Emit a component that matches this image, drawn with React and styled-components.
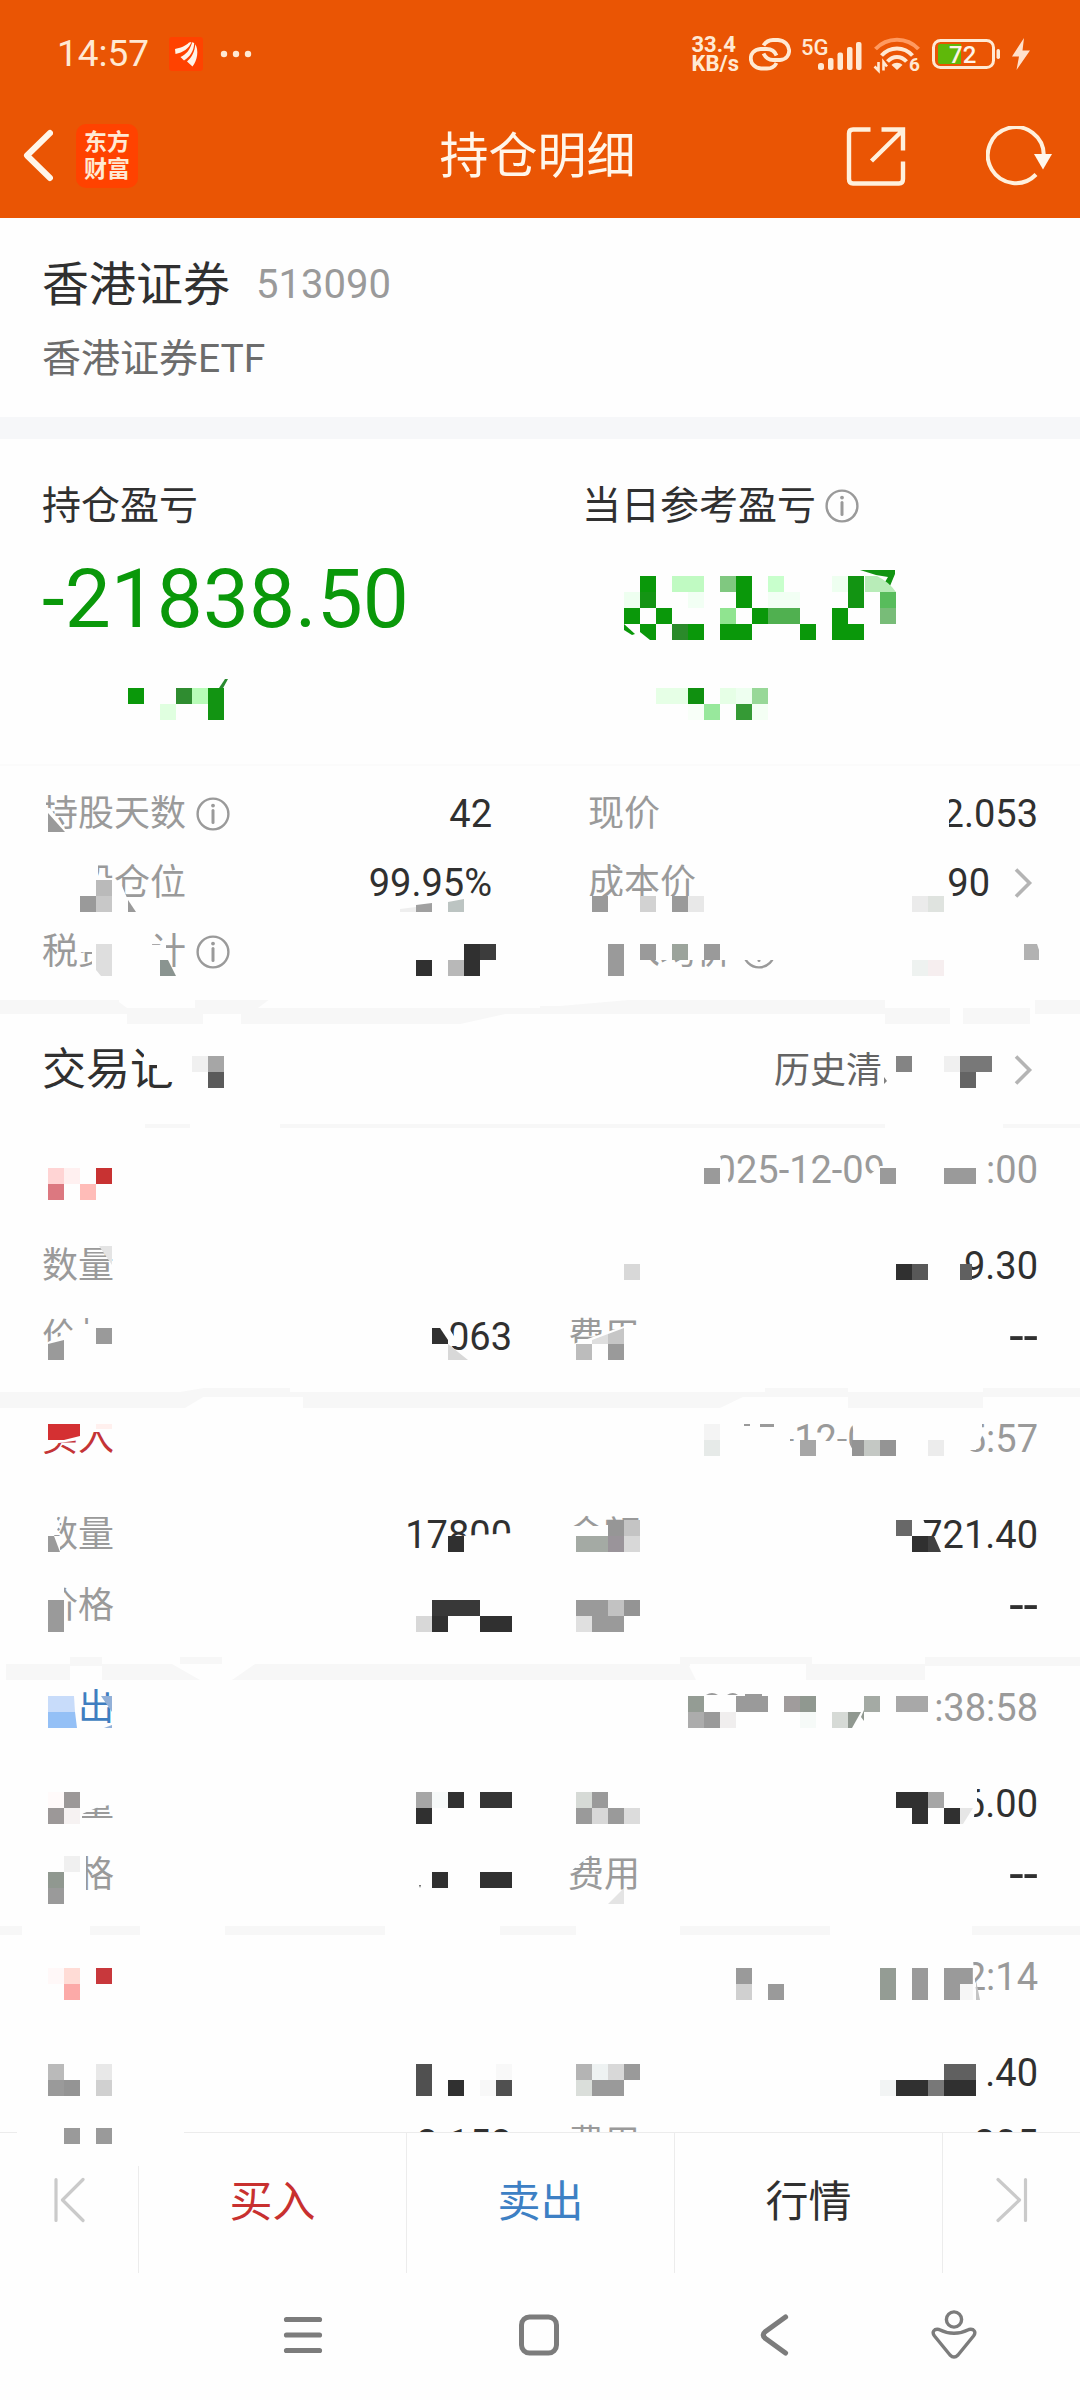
import React from 'react';
import styled, { createGlobalStyle } from 'styled-components';

const PAPER = '#fefefe';
const BAND = '#f7f7f7';
const INK = '#303030';
const GREY = '#9a9a9a';
const GREEN = '#0a980a';

// Mosaic cells sit on one 16px grid shared by the whole page:
// [column, row, columns, rows, color]
const CELL = 16;

function Mosaic({ right, top, cuts = [], cells = [] }) {
    return (
        <MosaicLayer $right={right} width="540" height="100" aria-hidden="true">
            <g transform={`translate(${right ? -540 : 0} ${-top})`}>
                {cuts.map(([d, fill], i) => (
                    <path key={i} d={d} fill={fill || PAPER} />
                ))}
                {cells.map(([x, y, w, h, fill], i) => (
                    <rect key={i} x={x * CELL} y={y * CELL} width={w * CELL} height={h * CELL} fill={fill} />
                ))}
            </g>
        </MosaicLayer>
    )
}

function InfoButton() {
    return (
        <IconButton aria-label="说明">
            <svg width="34" height="34" viewBox="0 0 34 34" fill="none" stroke="#9a9a9a" strokeWidth="2.4">
                <circle cx="17" cy="17" r="15.4" />
                <circle cx="17" cy="8.6" r="1.9" fill="#9a9a9a" stroke="none" />
                <path d="M17 13.4V25.6" strokeWidth="3" strokeLinecap="round" />
            </svg>
        </IconButton>
    )
}

function Chevron() {
    return (
        <svg width="24" height="34" viewBox="0 0 24 34" fill="none" stroke="#b4b4b4" strokeWidth="3.6">
            <path d="M2 3.5L15.5 17L2 30.5" />
        </svg>
    )
}

function StatusBar() {
    return (
        <Status>
            <Clock>14:57</Clock>
            <svg width="34" height="34" viewBox="0 0 34 34">
                <rect width="34" height="34" rx="3" fill="#ff4200" />
                <g fill="#fff4e8">
                    <path d="M6 12C11 11 17 9 20 5.5L22.5 5C20 11.5 14 15.5 6.5 17Z" />
                    <path d="M11.5 20C17 17.5 21 13 23.2 5.2L25.2 6C25 13.5 21 20 15 23.5Z" />
                    <path d="M18 24.5C23 20 26 14 26.2 7.2C30 13 28.5 23 23.5 29.5Z" />
                </g>
            </svg>
            <Dots width="32" height="8" viewBox="0 0 32 8" fill="#ffe9d3">
                <circle cx="4" cy="4" r="3.2" />
                <circle cx="16" cy="4" r="3.2" />
                <circle cx="28" cy="4" r="3.2" />
            </Dots>
            <StatusRight>
                <NetSpeed>33.4<br />KB/s</NetSpeed>
                <svg width="42" height="34" viewBox="0 0 42 34" fill="none" stroke="#ffe9d3" strokeWidth="3.8">
                    <path d="M14.5 8.5C17 4.5 20 3 24 3H29C43 4 44 22 31 23H24C19 23 16.5 20.5 14.5 16.5" />
                    <path d="M27.5 26C25.5 30 22 31.5 18 31.5H12C-1 30.5 -2 13 11.5 12H17.5C23 12 26 14.5 27.5 18.5" />
                </svg>
                <StatusIcon width="62" height="36" viewBox="0 0 62 36" fill="#ffe9d3">
                    <NetType x="0" y="19">5G</NetType>
                    <rect x="17" y="27" width="6" height="7" rx="2.5" />
                    <rect x="27" y="22" width="5.5" height="12" rx="2" />
                    <rect x="36.5" y="16.5" width="5.5" height="17.5" rx="2" />
                    <rect x="46" y="11" width="5.5" height="23" rx="2" />
                    <rect x="55" y="6" width="5.5" height="28" rx="2" />
                </StatusIcon>
                <StatusIcon width="48" height="38" viewBox="0 0 48 38" fill="none" strokeWidth="4">
                    <path d="M2.5 14C14 1.5 34 1.5 45.5 14" stroke="#ff9a60" />
                    <path d="M8.5 20.5C17 11 31 11 39.5 20.5" stroke="#ffe9d3" />
                    <path d="M14.5 26.5C20 20.5 28 20.5 33.5 26.5" stroke="#ffe9d3" />
                    <path d="M24 35L18.5 30C21.5 27 26.5 27 29.5 30Z" fill="#ffe9d3" />
                    <path d="M5.5 27V35.5L1.5 31.5M10.5 35.5V27L14 31.5" stroke="#ffe9d3" strokeWidth="2.6" />
                    <WifiGen x="36" y="36">6</WifiGen>
                </StatusIcon>
                <svg width="70" height="34" viewBox="0 0 70 34">
                    <rect x="2.5" y="3.5" width="60" height="27" rx="7" fill="none" stroke="#ffe9d3" strokeWidth="3" />
                    <path d="M9 7H30V27H9Q7 27 7 25V9Q7 7 9 7Z" fill="#5fb80a" />
                    <rect x="65.5" y="12" width="3.5" height="10" rx="1.7" fill="#ffe9d3" />
                    <BatteryText x="18" y="26">72</BatteryText>
                </svg>
                <svg width="20" height="34" viewBox="0 0 20 34">
                    <path d="M13 1L1 19.5H8L5.5 33L19 13.5H11.5Z" fill="#ffe0cc" />
                </svg>
            </StatusRight>
        </Status>
    )
}

function TitleBar() {
    return (
        <TitleRow>
            <TitleSide>
                <IconButton aria-label="返回">
                    <svg width="32" height="56" viewBox="0 0 32 56" fill="none" stroke="#fff6ea" strokeWidth="6" strokeLinecap="round" strokeLinejoin="round">
                        <path d="M29 5L6 27.5L29 50" />
                    </svg>
                </IconButton>
                <Brand>东方<br />财富</Brand>
            </TitleSide>
            <Title>持仓明细</Title>
            <TitleSide $end>
                <IconButton aria-label="分享">
                    <svg width="60" height="60" viewBox="0 0 60 60" fill="none" stroke="#fff0dc" strokeWidth="4.4">
                        <path d="M24.5 3.5H7Q3 3.5 3 7.5V53Q3 57.5 7 57.5H53Q57 57.5 57 53V35.5" />
                        <path d="M35.5 3.5H57V24.5M56 5L25.5 35" />
                    </svg>
                </IconButton>
                <IconButton aria-label="刷新">
                    <svg width="68" height="60" viewBox="0 0 68 60">
                        <path d="M50 48.5A28 28 0 1 1 57.8 29" fill="none" stroke="#fff0dc" strokeWidth="4" />
                        <path d="M48 28H66L57 43.5Z" fill="#fff8ee" />
                    </svg>
                </IconButton>
            </TitleSide>
        </TitleRow>
    )
}

function Stat({ label, info, value, link }) {
    return (
        <StatRow>
            <Label>{label}</Label>
            {info && <InfoButton />}
            <Value>{value}</Value>
            {link && <ChevronBox><Chevron /></ChevronBox>}
        </StatRow>
    )
}

const profitLeft = {
    cuts: [
        ['M219 688L225 679H228L222 690Z', '#2a8a30'],
    ],
    cells: [
        [8, 43, 1, 1, GREEN], [11, 43, 1, 1, '#2f8c30'], [12, 43, 1, 1, '#b8fcb8'], [13, 43, 1, 2, '#129412'],
        [10, 44, 1, 1, '#e0ffe0'],
    ],
};

const profitRight = {
    cuts: [
        ['M860 570H895V574L890 586L885 582L888 577L876 575Z', '#129412'],
        ['M865 576H877Q889 582 896 592H865Z', '#b8ecb8'],
        ['M624 624L635 634L632 635L624 630Z', GREEN],
        ['M640 624H656V640H650L640 632Z', GREEN],
    ],
    cells: [
        [40, 36, 1, 1, GREEN], [42, 36, 2, 1, '#c0fac2'], [45, 36, 1, 1, '#80c880'], [46, 36, 1, 2, GREEN],
        [48, 36, 1, 1, '#c8ffcc'], [52, 36, 1, 1, '#eefff0'], [53, 36, 1, 2, '#129412'],
        [39, 37, 1, 1, '#eefff0'], [40, 37, 1, 1, '#149414'], [43, 37, 1, 1, '#f2fff4'], [48, 37, 2, 1, '#f2fff4'],
        [55, 37, 1, 1, '#58bc5c'],
        [39, 38, 1, 1, GREEN], [41, 38, 1, 1, GREEN], [45, 38, 1, 1, '#90e490'], [47, 38, 1, 1, GREEN],
        [48, 38, 2, 1, '#50b050'], [52, 38, 1, 1, GREEN], [55, 38, 1, 1, '#78bc78'],
        [42, 39, 1, 1, '#2a8a2a'], [43, 39, 1, 1, GREEN], [45, 39, 2, 1, GREEN], [50, 39, 1, 1, GREEN],
        [52, 39, 2, 1, GREEN],
        [41, 43, 2, 1, '#e6ffe6'], [43, 43, 1, 1, '#109010'], [45, 43, 1, 1, '#e6ffe6'], [46, 43, 1, 1, '#eefff0'],
        [47, 43, 1, 1, '#98d898'], [43, 44, 1, 1, '#f8fff8'], [44, 44, 1, 1, '#98e89c'], [46, 44, 1, 1, '#359a35'],
        [47, 44, 1, 1, '#f4fff4'],
    ],
};

const statsLeft = {
    cuts: [
        ['M40 795H46V834H40ZM46 808L50 808L68 834H46Z'],
        ['M48 813L65 832H48Z', GREY],
        ['M40 860H98V905H40ZM98 880H113V905H98Z'],
        ['M113 886H122L130 905H113Z'],
        ['M128 900L136 912H128Z', GREY],
        ['M400 909L416 907V912H400Z', '#eeeeee'],
        ['M416 905L432 903V912H416Z', '#a0a0a0'],
        ['M448 902L464 899V912H448Z', '#bcc4c2'],
        ['M78 930H114V952H78ZM92 930H152V974H92ZM150 945H166V974H150Z'],
        ['M96 944H112V976H101L96 970Z', '#dedede'],
        ['M160 960H168L176 976H160Z', '#8a9490'],
        ['M119 999H195V1008H127L119 1002ZM270 999H540V1008H258Z'],
        ['M127 1013H203V1024H127ZM241 1013H510L460 1024H241Z', BAND],
    ],
    cells: [
        [6, 55, 1, 1, '#bababa'], [5, 56, 1, 1, GREY], [6, 56, 1, 1, '#c8c8c8'],
        [29, 59, 1, 2, INK], [30, 59, 1, 1, '#3c3c3c'], [26, 60, 1, 1, INK], [28, 60, 1, 1, '#b8b8b8'],
    ],
};

const statsRight = {
    cuts: [
        ['M940 790H949V830H940Z'],
        ['M580 896H710V912H580Z'],
        ['M580 930H785V960H580ZM580 930H646V976H580Z'],
        ['M1024 944H1037L1039 950V960H1024Z', '#b2b2b2'],
        ['M540 999H640L560 1006H540ZM885 999H1035V1015H885Z'],
        ['M885 1008H950V1024H885ZM963 1008H1030V1024H963Z', BAND],
    ],
    cells: [
        [37, 56, 1, 1, GREY], [40, 56, 1, 1, '#d2d2d2'], [42, 56, 1, 1, GREY], [43, 56, 1, 1, '#e8e8e8'],
        [57, 56, 1, 1, '#ebebeb'], [58, 56, 1, 1, '#dfe3df'],
        [38, 59, 1, 2, GREY], [40, 59, 1, 1, GREY], [42, 59, 1, 1, '#9ca49c'], [44, 59, 1, 1, GREY],
        [57, 60, 1, 1, '#eef2f0'], [58, 60, 1, 1, '#f6eeef'],
    ],
};

const historyLeft = {
    cuts: [
        ['M144 1044H176V1064H150V1060H144ZM157 1064H176V1082H157Z'],
        ['M0 1123H145V1129H0ZM190 1123H280V1129H190Z'],
    ],
    cells: [[12, 66, 1, 1, '#f0f0f0'], [13, 66, 1, 1, '#a6a6a6'], [13, 67, 1, 1, '#5a5a5a']],
};

const historyRight = {
    cuts: [
        ['M885 1123H1003V1129H885Z'],
        ['M884 1077L887 1081L884 1084Z', '#808080'],
    ],
    cells: [
        [56, 66, 1, 1, '#848484'], [59, 66, 1, 1, '#f0f0f0'], [60, 66, 2, 1, '#787878'], [60, 67, 1, 1, '#646464'],
    ],
};

// time: [start, width of the covered part, end]
const records = [
    {
        top: 1128,
        time: ['025-12-09', 101, ':00'],
        rows: [
            ['数量', '', '', '9.30'],
            ['价格', '063', '费用', '--'],
        ],
        left: {
            cuts: [
                ['M99 1246H112V1265Z', '#e4e4e4'],
                ['M40 1346L72 1330L76 1324H114V1362H40ZM90 1310H114V1326H90Z'],
                ['M48 1344L64 1340V1360H48Z', GREY],
                ['M438 1328H449L460 1346H438Z'],
                ['M432 1328H440L448 1340V1344H432Z', INK],
                ['M448 1344L468 1360H448Z', '#d8d8d8'],
                ['M0 1387H210L180 1392H0ZM290 1387H540V1392H290Z'],
                ['M0 1396H205L185 1408H0ZM303 1396H540V1408H303Z', BAND],
            ],
            cells: [
                [3, 73, 1, 1, '#ffd4d4'], [4, 73, 1, 1, '#fff0f0'], [6, 73, 1, 1, '#c83232'],
                [3, 74, 1, 1, '#dc7880'], [5, 74, 1, 1, '#ffbcb8'], [6, 83, 1, 1, GREY],
            ],
        },
        right: {
            cuts: [
                ['M700 1150H718L730 1186H700ZM866 1178L880 1166H886V1188H866Z'],
                ['M562 1348L624 1326V1362H562ZM624 1325H642V1362H624Z'],
                ['M592 1340L608 1334V1344H592Z', '#dedede'],
                ['M608 1334L624 1328V1344H608Z', '#c6c6c6'],
                ['M540 1387H765V1392H540ZM848 1387H983V1392H848Z'],
                ['M540 1396H745L720 1408H540ZM848 1396H983V1408H848Z', BAND],
            ],
            cells: [
                [44, 73, 1, 1, GREY], [55, 73, 1, 1, GREY], [59, 73, 2, 1, GREY], [39, 79, 1, 1, '#d8d8d8'],
                [56, 79, 1, 1, INK], [57, 79, 1, 1, '#585858'], [60, 79, 0.75, 1, '#606060'],
                [36, 84, 1, 1, '#bcbcbc'], [38, 84, 1, 1, GREY],
            ],
        },
    },
    {
        top: 1397,
        side: 'buy',
        type: '买入',
        time: ['5-12-0', 96, '5:57'],
        rows: [
            ['数量', '17800', '金额', '6721.40'],
            ['价格', '', '', '--'],
        ],
        left: {
            cuts: [
                ['M40 1418H112V1432H80V1440L52 1444H40Z'],
                ['M48 1424H80V1436L64 1440H48Z', '#d43032'],
                ['M96 1424H112V1429H96Z', '#fff0ee'],
                ['M40 1514H54L60 1524L54 1536H60V1554H40Z'],
                ['M48 1536H54L60 1552H48Z', GREY],
                ['M444 1543L460 1536L514 1533V1552H444Z'],
                ['M40 1584H64V1624H40Z'],
                ['M0 1656H70V1668H0ZM102 1656H180V1664H102ZM172 1664H255V1668H172ZM222 1656H540V1664H222Z'],
                ['M6 1664H70V1680H6ZM102 1664H172L200 1680H102ZM255 1664H540V1680H232Z', BAND],
            ],
            cells: [
                [28, 96, 1, 1, INK], [3, 100, 1, 2, GREY], [27, 100, 3, 1, '#383838'], [26, 101, 1, 1, '#d8d8d8'],
                [27, 101, 1, 1, INK], [30, 101, 2, 1, INK],
            ],
        },
        right: {
            cuts: [
                ['M720 1418H790V1458H720ZM790 1441H848L856 1456H790ZM852 1420H870V1456H856Z'],
                ['M960 1420H982V1436L976 1450H960Z'],
                ['M744 1424H750V1426H744ZM760 1424H774V1427H760Z', GREY],
                ['M564 1526H608V1554H564ZM608 1520H642V1554H608Z'],
                ['M896 1514H921L930 1536H940V1554H896Z'],
                ['M928 1536H934L941 1552H928Z', '#404040'],
                ['M540 1656H680V1664H540ZM812 1656H925V1664H812ZM690 1664H806V1668H690Z'],
                ['M540 1664H688L696 1680H540ZM806 1664H925V1680H806Z', BAND],
            ],
            cells: [
                [44, 89, 1, 1, '#f4f4f4'], [44, 90, 1, 1, '#e6eae8'], [50, 90, 1, 1, '#a6a6a6'],
                [53.25, 90, 0.75, 1, '#949494'], [54, 90, 1, 1, '#c4c8c4'], [55, 90, 1, 1, '#949494'],
                [58, 90, 1, 1, '#ececec'],
                [38, 95, 1, 1, '#969696'], [39, 95, 1, 1, '#c4c4c4'], [56, 95, 1, 1, '#686868'],
                [36, 96, 2, 1, '#a4aaa4'], [38, 96, 1, 1, '#9a949a'], [39, 96, 1, 1, '#d8d8d8'], [57, 96, 1, 1, INK],
                [36, 100, 2, 1, GREY], [38, 100, 1, 1, '#c2c2c2'], [39, 100, 1, 1, '#949494'],
                [36, 101, 1, 1, '#e0e0e0'], [37, 101, 2, 1, GREY],
            ],
        },
    },
    {
        top: 1666,
        side: 'sell',
        type: '卖出',
        time: ['', 0, ':38:58'],
        rows: [
            ['数量', '', '', '6.00'],
            ['价格', '', '费用', '--'],
        ],
        left: {
            cuts: [
                ['M40 1684H78V1728H40Z'],
                ['M48 1696H74L75 1712H48Z', '#c8dcfa'],
                ['M48 1712H75L77 1728H48Z', '#94c0f6'],
                ['M101 1696H112V1712Z', '#92b0d8'],
                ['M104 1728L112 1725V1728Z', '#92b0d8'],
                ['M40 1782H82V1826H40ZM78 1782H114V1804L96 1808L82 1814H78Z'],
                ['M40 1852H86V1906H40Z'],
                ['M419 1885H421L420 1888Z', '#606060'],
                ['M22 1925H90V1936H22ZM140 1925H225V1936H140ZM385 1925H500V1936H385Z'],
            ],
            cells: [
                [3, 112, 1, 1, '#fffafa'], [4, 112, 1, 1, '#9c9898'], [3, 113, 1, 1, '#9c9898'], [4, 113, 1, 1, '#f6f2f2'],
                [26, 112, 1, 1, '#a6a6a6'], [27, 112, 1, 1, '#f6f9f9'], [28, 112, 1, 1, INK], [30, 112, 2, 1, '#343434'],
                [26, 113, 1, 1, INK], [4, 116, 1, 1, '#f0f0f0'], [3, 117, 1, 1, '#909890'], [3, 118, 1, 1, GREY],
                [27, 117, 1, 1, INK], [30, 117, 2, 1, INK],
            ],
        },
        right: {
            cuts: [
                ['M706 1695Q712 1691 718 1695ZM727 1695Q733 1691 738 1695ZM745 1694H762V1696H745Z', GREY],
                ['M848 1712H861L852 1728H848ZM861 1717L864 1710V1721Z', '#909890'],
                ['M962 1782H977V1802L972 1826H962Z'],
                ['M960 1808H973L963 1824H960Z', '#e6e6e6'],
                ['M566 1854H592L570 1872H566Z'],
                ['M608 1904L624 1888V1904Z', '#e4e4e4'],
                ['M576 1925H680V1936H576ZM830 1925H972V1936H830Z'],
            ],
            cells: [
                [43, 106, 1, 1, '#949c94'], [46, 106, 2, 1, GREY], [49, 106, 1, 1, '#a09c9c'], [50, 106, 1, 1, '#909890'],
                [54, 106, 1, 1, '#a4aaa4'], [56, 106, 2, 1, '#a8a8a8'],
                [43, 107, 1, 1, '#acacac'], [44, 107, 1, 1, GREY], [45, 107, 1, 1, '#f0eeee'], [50, 107, 1, 1, '#f6faf8'],
                [52, 107, 1, 1, '#d6dad6'],
                [36, 112, 1, 1, '#d6dad6'], [37, 112, 1, 1, GREY], [36, 113, 1, 1, GREY], [37, 113, 1, 1, '#d8d8d8'],
                [38, 113, 1, 1, GREY], [39, 113, 1, 1, '#dcdcdc'],
                [56, 112, 2, 1, INK], [58, 112, 1, 1, '#a6a6a6'], [57, 113, 1, 1, INK], [59, 113, 1, 1, INK],
            ],
        },
    },
    {
        top: 1935,
        time: ['', 0, '2:14'],
        rows: [
            ['', '', '', '.40'],
            ['', '2.153', '费用', '205'],
        ],
        left: {
            cells: [
                [3, 123, 1, 1, '#fff8f8'], [4, 123, 1, 1, '#ffdcd6'], [6, 123, 1, 1, '#c8383c'], [4, 124, 1, 1, '#fcaaa8'],
                [3, 129, 1, 1, '#bababa'], [6, 129, 1, 1, '#e8e8e8'], [26, 129, 1, 2, '#505050'], [31, 129, 1, 1, '#f8f8f8'],
                [3, 130, 1, 1, GREY], [4, 130, 1, 1, '#949494'], [6, 130, 1, 1, '#d0d0d0'], [28, 130, 1, 1, INK],
                [30, 130, 1, 1, '#f8f8f8'], [31, 130, 1, 1, '#505050'],
            ],
        },
        right: {
            cuts: [
                ['M965 1960H973L977 2000H965Z'],
                ['M976 1980L980 2000H976Z', '#c4c4c4'],
            ],
            cells: [
                [46, 123, 1, 1, GREY], [46, 124, 1, 1, '#d0d0d0'], [48, 124, 1, 1, GREY], [55, 123, 1, 2, '#949c94'],
                [57, 123, 1, 2, GREY], [59, 123, 1, 2, GREY], [60, 123, 0.8, 1, GREY], [60, 124, 0.8, 1, '#f6f6f6'],
                [36, 129, 1, 1, '#b4b4b4'], [37, 129, 1, 1, '#eef2f2'], [38, 129, 1, 1, '#d8d8d8'], [39, 129, 1, 1, GREY],
                [36, 130, 1, 1, '#dadeda'], [37, 130, 2, 1, GREY],
                [59, 129, 2, 1, '#606060'], [55, 130, 1, 1, '#f2f4f4'], [56, 130, 2, 1, INK], [58, 130, 1, 1, '#787878'],
                [59, 130, 2, 1, INK],
            ],
        },
    },
];

function TradeRecord({ record }) {
    const { top, side, type, time, rows, left, right } = record;

    return (
        <Record>
            <RecordHead>
                <TradeType $side={side}>{type}</TradeType>
                <Time>{time[0]}<Gap $width={time[1]} />{time[2]}</Time>
            </RecordHead>
            <RecordBody>
                {rows.map(([label, value, label2, value2], i) => (
                    <React.Fragment key={i}>
                        <RecordField>
                            <Label>{label}</Label>
                            <Value>{value}</Value>
                        </RecordField>
                        <RecordField>
                            <Label>{label2}</Label>
                            <Value $empty={value2 === '--'}>{value2}</Value>
                        </RecordField>
                    </React.Fragment>
                ))}
            </RecordBody>
            <Mosaic top={top} {...left} />
            <Mosaic right top={top} {...right} />
        </Record>
    )
}

function App() {
    return (
        <Page>
            <GlobalStyle />
            <Header>
                <StatusBar />
                <TitleBar />
            </Header>

            <Content>
                <Fund>
                    <FundTitle>
                        <FundName>香港证券</FundName>
                        <FundCode>513090</FundCode>
                    </FundTitle>
                    <FundFull>香港证券ETF</FundFull>
                </Fund>

                <Profit>
                    <ProfitCol>
                        <ProfitLabel>持仓盈亏</ProfitLabel>
                        <ProfitValue>-21838.50</ProfitValue>
                    </ProfitCol>
                    <ProfitCol>
                        <ProfitLabel>当日参考盈亏 <InfoButton /></ProfitLabel>
                    </ProfitCol>
                    <Mosaic top={439} {...profitLeft} />
                    <Mosaic right top={439} {...profitRight} />
                </Profit>

                <Stats>
                    <Stat label="持股天数" info value="42" />
                    <Stat label="现价" value="2.053" />
                    <Stat label="个股仓位" value="99.95%" />
                    <Stat label="成本价" value="90" link />
                    <Stat label="税费合计" info value="" />
                    <Stat label="买入均价" info value="" />
                    <Mosaic top={766} {...statsLeft} />
                    <Mosaic right top={766} {...statsRight} />
                </Stats>

                <HistoryHead>
                    <HistoryTitle>交易记</HistoryTitle>
                    <HistoryLink href="#history">
                        <HistoryText>历史清</HistoryText>
                        <Chevron />
                    </HistoryLink>
                    <Mosaic top={1014} {...historyLeft} />
                    <Mosaic right top={1014} {...historyRight} />
                </HistoryHead>

                {records.map(record => (
                    <TradeRecord key={record.top} record={record} />
                ))}
            </Content>

            <ActionBar>
                <EdgeButton aria-label="上一个">
                    <svg width="32" height="46" viewBox="0 0 32 46" fill="none" stroke="#cacaca" strokeWidth="3.2" strokeLinecap="round" strokeLinejoin="round">
                        <path d="M3 2.5V43.5M30 2.5L9.5 23L30 43.5" />
                    </svg>
                </EdgeButton>
                <ActionButton $color="#c8302f">买入</ActionButton>
                <ActionButton $color="#3d80c4">卖出</ActionButton>
                <ActionButton $color={INK}>行情</ActionButton>
                <EdgeButton aria-label="下一个">
                    <svg width="32" height="46" viewBox="0 0 32 46" fill="none" stroke="#cacaca" strokeWidth="3.2" strokeLinecap="round" strokeLinejoin="round">
                        <path d="M29.5 2.5V43.5M2 2.5L23.5 23L2 43.5" />
                    </svg>
                </EdgeButton>
                <Mosaic
                    top={2133}
                    cuts={[['M17 2131H184V2134H17ZM136 2133H142V2166H136Z']]}
                    cells={[[4, 133, 1, 1, GREY], [6, 133, 1, 1, GREY]]}
                />
            </ActionBar>

            <SystemNav>
                <NavButton aria-label="菜单">
                    <svg width="44" height="44" viewBox="0 0 44 44" stroke="#7c7c7c" strokeWidth="5.2" strokeLinecap="round">
                        <path d="M5.5 6.5H38.5M5.5 22H38.5M5.5 37.5H38.5" />
                    </svg>
                </NavButton>
                <NavButton aria-label="主屏幕">
                    <svg width="44" height="44" viewBox="0 0 44 44" fill="none" stroke="#7c7c7c" strokeWidth="5">
                        <rect x="4.5" y="4" width="35" height="36" rx="8" />
                    </svg>
                </NavButton>
                <NavButton aria-label="系统返回">
                    <svg width="44" height="44" viewBox="0 0 44 44" fill="none" stroke="#7c7c7c" strokeWidth="5.2" strokeLinecap="round">
                        <path d="M32.5 4L12.5 18.5Q8 22 12.5 25.5L32.5 40" />
                    </svg>
                </NavButton>
                <NavButton aria-label="无障碍">
                    <svg width="46" height="50" viewBox="0 0 46 50" fill="none" stroke="#7c7c7c" strokeWidth="3.4">
                        <circle cx="23" cy="9.5" r="7.6" />
                        <path d="M8 19.5Q23 27 38 19.5C43 18.500 45.5 22 42.5 26L27 45Q23 49 19 45L3.5 26C0.5 22 3 18.5 8 19.5Z" strokeLinejoin="round" />
                    </svg>
                </NavButton>
            </SystemNav>
        </Page>
    )
}

export default App;

const GlobalStyle = createGlobalStyle`
    * {
        box-sizing: border-box;
        margin: 0;
        padding: 0;
    }

    body {
        background: ${PAPER};
        color: ${INK};
        font-family: Roboto, "Noto Sans CJK SC", sans-serif;
    }

    svg {
        display: block;
        flex-shrink: 0;
    }

    button {
        border: none;
        background: none;
        font: inherit;
        cursor: pointer;
    }
`;

const Page = styled.div`
    display: flex;
    flex-direction: column;
    height: 100vh;
`;

const MosaicLayer = styled.svg`
    position: absolute;
    top: 0;
    ${props => props.$right ? 'right: 0;' : 'left: 0;'}
    overflow: visible;
    pointer-events: none;
`;

const IconButton = styled.button`
    display: flex;
    align-items: center;
`;

const Header = styled.header`
    background: #ea5504;
`;

const Status = styled.div`
    display: flex;
    align-items: center;
    height: 94px;
    padding: 14px 49px 0 57px;
    color: #ffe9d3;
`;

const Clock = styled.time`
    width: 112px;
    font-size: 37px;
    font-weight: 400;
    line-height: 44px;
`;

const Dots = styled.svg`
    margin-left: 17px;
`;

const StatusRight = styled.div`
    display: flex;
    align-items: center;
    gap: 10px;
    margin-left: auto;
`;

const StatusIcon = styled.svg`
    overflow: visible;
`;

const NetSpeed = styled.div`
    font-size: 22px;
    font-weight: 700;
    line-height: 19px;
`;

const NetType = styled.text`
    font-size: 22px;
    font-weight: 500;
`;

const WifiGen = styled.text`
    fill: #ffe9d3;
    stroke: none;
    font-size: 19px;
    font-weight: 700;
`;

const BatteryText = styled.text`
    fill: #fff4e8;
    font-size: 24px;
    font-weight: 500;
`;

const TitleRow = styled.div`
    display: grid;
    grid-template-columns: 1fr auto 1fr;
    align-items: center;
    height: 124px;
    padding: 0 26px 0 21px;
`;

const TitleSide = styled.div`
    display: flex;
    align-items: center;
    gap: ${props => props.$end ? 80 : 23}px;
    justify-content: ${props => props.$end ? 'flex-end' : 'flex-start'};
`;

const Brand = styled.div`
    padding: 5px 8px;
    border-radius: 10px;
    background: #ff4200;
    color: #ffe9d3;
    font-size: 23px;
    font-weight: 700;
    line-height: 27px;
`;

const Title = styled.h1`
    padding-top: 2px;
    color: #fff6ea;
    font-size: 49px;
    font-weight: 400;
    line-height: 60px;
`;

const Content = styled.main`
    flex: 1;
    min-height: 0;
    overflow-y: auto;
    scrollbar-width: none;
`;

const Fund = styled.section`
    height: 221px;
    padding: 35px 42px 0;
    border-bottom: 22px solid #f6f7f9;
`;

const FundTitle = styled.div`
    display: flex;
    align-items: center;
    gap: 26px;
    height: 64px;
`;

const FundName = styled.h2`
    font-size: 47px;
    font-weight: 400;
    line-height: 64px;
`;

const FundCode = styled.span`
    color: ${GREY};
    font-size: 40px;
    line-height: 64px;
`;

const FundFull = styled.p`
    margin-top: 14px;
    color: #6c6c6c;
    font-size: 39px;
    line-height: 56px;
`;

const Profit = styled.section`
    position: relative;
    display: grid;
    grid-template-columns: 1fr 1fr;
    height: 327px;
    border-bottom: 2px solid #fbfbfb;
`;

const ProfitCol = styled.div`
    padding: 39px 0 0 42px;
`;

const ProfitLabel = styled.div`
    display: flex;
    align-items: center;
    gap: 9px;
    height: 56px;
    font-size: 39px;
    line-height: 56px;
`;

const ProfitValue = styled.div`
    margin-top: 15px;
    color: ${GREEN};
    font-size: 82px;
    line-height: 100px;
`;

const Stats = styled.section`
    position: relative;
    display: grid;
    grid-template-columns: 1fr 1fr;
    column-gap: 96px;
    padding: 13px 42px 14px;
    border-bottom: 14px solid ${BAND};
`;

const StatRow = styled.div`
    display: flex;
    align-items: center;
    height: 69px;
    gap: 10px;
`;

const Label = styled.span`
    color: ${GREY};
    font-size: 36px;
    line-height: 44px;
`;

const Value = styled.span`
    margin-left: auto;
    color: ${INK};
    font-size: ${props => props.$empty ? 52 : 38}px;
    line-height: 44px;
`;

const ChevronBox = styled.span`
    margin-left: 14px;
`;

const HistoryHead = styled.div`
    position: relative;
    display: flex;
    align-items: center;
    justify-content: space-between;
    height: 114px;
    padding: 2px 42px 0;
    border-bottom: 4px solid ${BAND};
`;

const HistoryTitle = styled.h2`
    font-size: 44px;
    font-weight: 400;
    line-height: 56px;
`;

const HistoryLink = styled.a`
    display: flex;
    align-items: center;
    gap: 24px;
    color: #646464;
    text-decoration: none;
`;

const HistoryText = styled.span`
    min-width: 216px;
    padding-top: 2px;
    font-size: 36px;
    line-height: 44px;
`;

const Record = styled.article`
    position: relative;
    padding-bottom: 16px;
    border-bottom: 9px solid ${BAND};
`;

const RecordHead = styled.div`
    display: flex;
    align-items: center;
    justify-content: space-between;
    height: 82px;
    padding: 2px 42px 0;
`;

const TradeType = styled.span`
    color: ${props => props.$side === 'sell' ? '#3f7ec0' : '#c43436'};
    font-size: 36px;
    line-height: 44px;
`;

const Time = styled.time`
    color: ${GREY};
    font-size: 38px;
    line-height: 44px;
`;

const Gap = styled.span`
    display: inline-block;
    width: ${props => props.$width}px;
`;

const RecordBody = styled.div`
    display: grid;
    grid-template-columns: 1fr 1fr;
    column-gap: 56px;
    padding: 20px 42px 0;
`;

const RecordField = styled.div`
    display: flex;
    align-items: center;
    height: 71px;
`;

const ActionBar = styled.div`
    position: relative;
    display: flex;
    height: 141px;
    border-top: 1px solid #ececec;
`;

const EdgeButton = styled.button`
    display: flex;
    align-items: center;
    justify-content: center;
    width: 138px;
    padding-bottom: 6px;
`;

const ActionButton = styled.button`
    flex: 1;
    padding-bottom: 2px;
    border-left: 1px solid #ececec;
    color: ${props => props.$color};
    font-size: 43px;
    line-height: 60px;

    & + ${EdgeButton} {
        border-left: 1px solid #ececec;
    }
`;

const SystemNav = styled.nav`
    display: grid;
    grid-template-columns: 185fr 236fr 236fr 236fr 122fr 65fr;
    align-items: center;
    height: 127px;
    padding-bottom: 4px;

    button:first-child {
        grid-column: 2;
    }
`;

const NavButton = styled.button`
    display: flex;
    justify-content: center;
`;
